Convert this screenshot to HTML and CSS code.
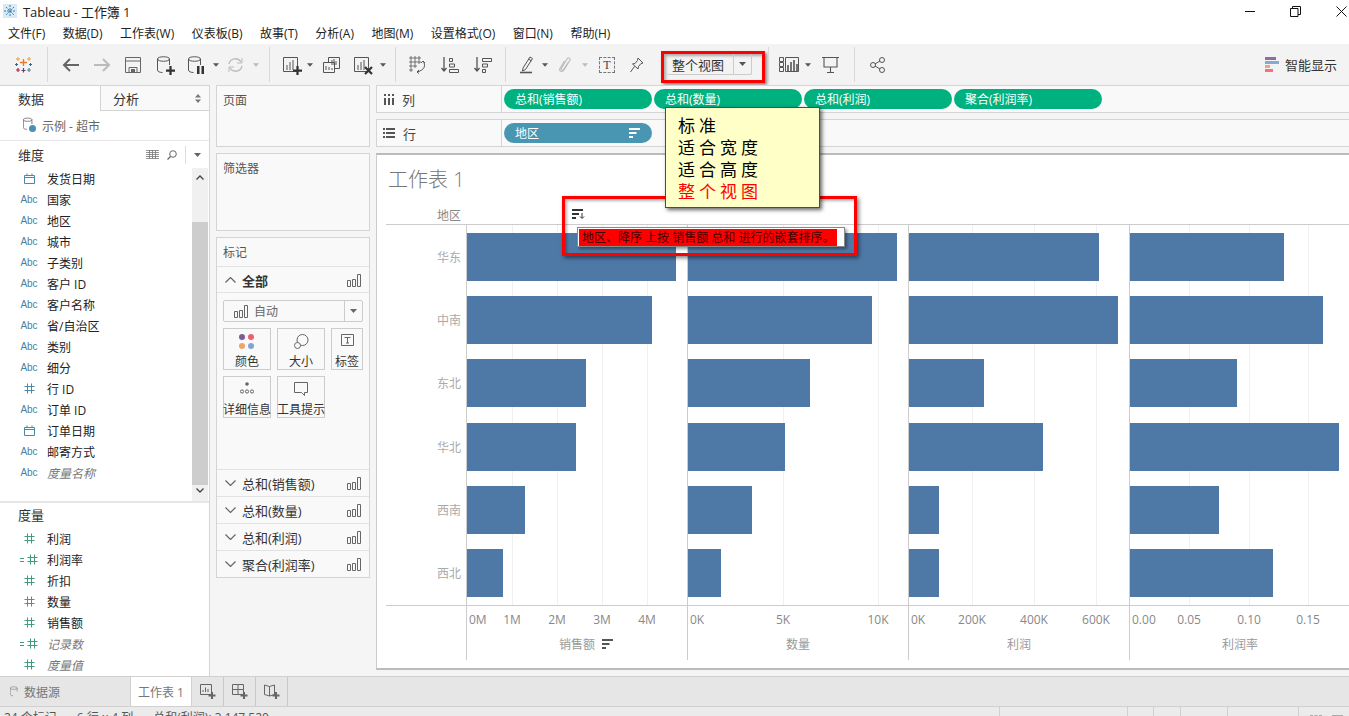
FILE: index.html
```html
<!DOCTYPE html>
<html lang="zh-CN">
<head>
  <meta charset="UTF-8" />
  <title>Tableau - 工作簿 1</title>
  <link rel="stylesheet" href="styles.css">
</head>
<body>
  <svg class="defs" width="0" height="0">
    <symbol id="i-hash" viewBox="0 0 11 11"><path d="M3.5 .5v10M7.5 .5v10M.5 3.5h10M.5 7.5h10" fill="none" stroke="currentColor"/></symbol>
    <symbol id="i-calc" viewBox="0 0 20 11"><path d="M12.5 .5v10M16.5 .5v10M9.5 3.5h10M9.5 7.5h10M2 4.5h4M2 7.5h4" fill="none" stroke="currentColor"/></symbol>
    <symbol id="i-date" viewBox="0 0 11 11"><path d="M.5 2.5h10v8H.5zM3 .5v2M8 .5v2M.5 4.5h10" fill="none" stroke="currentColor"/></symbol>
    <symbol id="i-bars" viewBox="0 0 14 13"><path d="M.5 6.5h3v6h-3zM5.5 5.5h3v7h-3zM10.5 .5h3v12h-3z" fill="none" stroke="currentColor"/></symbol>
    <symbol id="i-sort" viewBox="0 0 11 10"><path d="M0 0h11v2H0zM0 4h7.500v2H0zM0 8h4v2H0z" fill="currentColor"/></symbol>
    <symbol id="i-cyl" viewBox="0 0 14 18"><path d="M.5 3v11c0 1.500 2 2.500 5 2.500M12.500 3v6M.5 3c0-3 12-3 12 0s-12 3-12 0z" fill="none" stroke="currentColor"/></symbol>
    <symbol id="i-chev" viewBox="0 0 11 6"><path d="M.5 .5l5 5 5-5" fill="none" stroke="currentColor" stroke-width="1.200"/></symbol>
    <symbol id="i-caret" viewBox="0 0 7 4"><path d="M0 0h7L3.500 4z" fill="currentColor"/></symbol>
    <symbol id="i-plus" viewBox="0 0 10 10"><path d="M5 0v10M0 5h10" fill="none" stroke="currentColor" stroke-width="2.500"/></symbol>
  </svg>

  <div class="app">
    <header class="title-bar">
      <svg class="app-icon" width="14" height="14" viewBox="0 0 14 14"><rect width="14" height="14" fill="#dbe9f2"/><path d="M7 1v12M1 7h12M3 3l8 8M11 3l-8 8" stroke="#2f7fb0" stroke-width="1" stroke-dasharray="2 1"/></svg>
      <span class="app-name">Tableau - 工作簿 1</span>
      <div class="win-btns">
        <span class="win-btn"><svg width="11" height="11" viewBox="0 0 11 11"><path d="M0 5.500h10" stroke="#111"/></svg></span>
        <span class="win-btn"><svg width="11" height="11" viewBox="0 0 11 11"><path d="M.5 2.500h7.500v8H.5zM2.500 2.500V.5h8v8H8" fill="none" stroke="#111"/></svg></span>
        <span class="win-btn"><svg width="11" height="11" viewBox="0 0 11 11"><path d="M.5 .5l10 10M10.500 .5l-10 10" stroke="#111"/></svg></span>
      </div>
    </header>

    <nav class="menu-bar">
      <span>文件(F)</span><span>数据(D)</span><span>工作表(W)</span><span>仪表板(B)</span><span>故事(T)</span><span>分析(A)</span><span>地图(M)</span><span>设置格式(O)</span><span>窗口(N)</span><span>帮助(H)</span>
    </nav>

    <div class="toolbar">
      <span class="tool w35"><svg width="17" height="17" viewBox="0 0 17 17"><path d="M8.500 3v7M5 6.500h7" stroke="#e8762d" stroke-width="1.300"/><path d="M3 1v4M1 3h4M14 1v4M12 3h4" stroke="#f0a13c" stroke-width="1"/><path d="M3 12v4M1 14h4" stroke="#c72035" stroke-width="1.200"/><path d="M14 12v4M12 14h4" stroke="#5b879b" stroke-width="1.200"/><path d="M8.500 12v4.500M6.500 14.500h4" stroke="#59457a" stroke-width="1.200"/><path d="M1.500 7v3M0 8.500h3M15.500 7v3M14 8.500h3" stroke="#1f6f9c" stroke-width="1"/></svg></span>
      <i class="sep"></i>
      <span class="tool w32"><svg width="17" height="14" viewBox="0 0 17 14"><path d="M17 7H2M8 1L2 7l6 6" fill="none" stroke="#666" stroke-width="2"/></svg></span>
      <span class="tool w32 off"><svg width="17" height="14" viewBox="0 0 17 14"><path d="M0 7h15M9 1l6 6-6 6" fill="none" stroke="#bbb" stroke-width="2"/></svg></span>
      <span class="tool w30"><svg width="16" height="16" viewBox="0 0 16 16"><path d="M.5 .5h15v15H.5zM.5 4h15M4 15.500v-5h8v5" fill="none" stroke="#666"/><path d="M6 12h4v3.500H6z" fill="#666"/></svg></span>
      <span class="tool w32 stack"><svg class="ink" width="14" height="18"><use href="#i-cyl"/></svg><svg class="badge dark" width="9" height="9"><use href="#i-plus"/></svg></span>
      <span class="tool w30 stack"><svg class="ink" width="14" height="18"><use href="#i-cyl"/></svg><svg class="badge" width="7" height="8" viewBox="0 0 7 8"><path d="M0 0h2.500v8H0zM4.500 0H7v8H4.500z" fill="#333"/></svg></span>
      <span class="caret w12"><svg width="6" height="4"><use href="#i-caret"/></svg></span>
      <span class="tool w26"><svg width="17" height="16" viewBox="0 0 17 16"><path d="M2 7a6.500 6.500 0 0 1 12-2M15 9a6.500 6.500 0 0 1-12 2" fill="none" stroke="#bbb" stroke-width="1.300"/><path d="M15 1v5h-5M2 15v-5h5" fill="none" stroke="#bbb"/></svg></span>
      <span class="caret w15 light"><svg width="6" height="4"><use href="#i-caret"/></svg></span>
      <i class="sep"></i>
      <span class="tool w29 stack"><svg class="ink" width="16" height="16" viewBox="0 0 16 16"><path d="M.5 .5h14v14H.5zM4 8v5M7 5v8M10 3v10" fill="none" stroke="currentColor"/></svg><svg class="badge dark" width="9" height="9"><use href="#i-plus"/></svg></span>
      <span class="caret w10"><svg width="6" height="4"><use href="#i-caret"/></svg></span>
      <span class="tool w32"><svg class="ink" width="17" height="16" viewBox="0 0 17 16"><path d="M5.500 5V.5h11v11H12M.5 5.500h11v10H.5zM9 8V3M11 8V2M13 8V4M3 13v-4M6 13v-3M9 13v-2" fill="none" stroke="currentColor"/></svg></span>
      <span class="tool w30 stack"><svg class="ink" width="16" height="16" viewBox="0 0 16 16"><path d="M.5 .5h14v14H.5zM4 8v5M7 5v8M10 3v10" fill="none" stroke="currentColor"/></svg><svg class="badge dark" width="9" height="9" viewBox="0 0 9 9"><path d="M1 1l7 7M8 1L1 8" stroke="#333" stroke-width="2.200"/></svg></span>
      <span class="caret w12"><svg width="6" height="4"><use href="#i-caret"/></svg></span>
      <i class="sep"></i>
      <span class="tool w31"><svg class="ink" width="18" height="18" viewBox="0 0 18 18"><path d="M1 1h2v2H1zM5 1h2v2H5zM9 1h2v2H9zM1 5h2v2H1zM5 5h2v2H5zM9 5h2v2H9zM1 9h2v2H1zM5 9h2v2H5zM1 13h2v2H1z" fill="none" stroke="currentColor" stroke-width=".8"/><path d="M14 5c3 4 2 9-6 11M14 5l-2 2M14 5l2 2M8 16l2-2M8 16l2 1.500" fill="none" stroke="currentColor"/></svg></span>
      <span class="tool w34"><svg class="ink" width="18" height="16" viewBox="0 0 18 16"><path d="M3 0v14M.5 11L3 14l2.500-3" fill="none" stroke="currentColor" stroke-width="1.300"/><path d="M8.500 1.500h3v3h-3zM8.500 7h5v3h-5zM8.500 12.500h9v3h-9z" fill="none" stroke="currentColor"/></svg></span>
      <span class="tool w32"><svg class="ink" width="18" height="16" viewBox="0 0 18 16"><path d="M3 0v14M.5 11L3 14l2.500-3" fill="none" stroke="currentColor" stroke-width="1.300"/><path d="M8.500 1.500h9v3h-9zM8.500 7h5v3h-5zM8.500 12.500h3v3h-3z" fill="none" stroke="currentColor"/></svg></span>
      <i class="sep"></i>
      <span class="tool w28"><svg class="ink" width="13" height="18" viewBox="0 0 13 18"><path d="M3 12L10 1l2.500 1.500L5.500 13.500 2.500 15zM8.500 3l3 2" fill="none" stroke="currentColor"/><path d="M0 16.500h12" stroke="currentColor" stroke-width="1.600"/></svg></span>
      <span class="caret w10"><svg width="6" height="4"><use href="#i-caret"/></svg></span>
      <span class="tool w30"><svg width="12" height="17" viewBox="0 0 12 17"><path d="M9.500 6L4.500 13.500c-1 1.500-3 .5-2.200-1L8 3c1.200-2 4 -.5 2.800 1.500L5 14c-2 3-5.500 1-4-1.800L5.500 5" fill="none" stroke="#bbb" stroke-width="1.100"/></svg></span>
      <span class="caret w10 light"><svg width="6" height="4"><use href="#i-caret"/></svg></span>
      <span class="tool w34"><span class="t-box">T</span></span>
      <span class="tool w26"><svg class="ink" width="14" height="16" viewBox="0 0 14 16"><path d="M8 1l5 5-2 .5-2.500 3L8 12 2.500 7 5 6.500 7.500 3.500zM4.500 9.500L.5 15" fill="none" stroke="currentColor"/></svg></span>
      <div class="annot-fit">
        <div class="combo"><span class="combo-text">整个视图</span><span class="combo-arrow"><svg width="7" height="4"><use href="#i-caret"/></svg></span></div>
      </div>
      <i class="sep"></i>
      <span class="tool w28"><svg class="ink" width="20" height="15" viewBox="0 0 20 15"><path d="M.5 .5h4v4h-4zM.5 5.500h4v4h-4zM.5 10.500h4v4h-4zM6.500 .5h13v14h-13z" fill="none" stroke="currentColor"/><path d="M9 8v6M12 5v9M15 3v11M18 7v7" stroke="currentColor" stroke-width="1.600"/></svg></span>
      <span class="caret w10"><svg width="6" height="4"><use href="#i-caret"/></svg></span>
      <span class="tool w35"><svg class="ink" width="17" height="16" viewBox="0 0 17 16"><path d="M0 .5h17M2 .5v9.500h13V.5M8.500 10v5M5 15.500h7" fill="none" stroke="currentColor" stroke-width="1.100"/></svg></span>
      <i class="sep"></i>
      <span class="tool w32"><svg class="ink" width="15" height="16" viewBox="0 0 15 16"><circle cx="3" cy="8" r="2.500" fill="none" stroke="currentColor"/><circle cx="12" cy="3" r="2.500" fill="none" stroke="currentColor"/><circle cx="12" cy="13" r="2.500" fill="none" stroke="currentColor"/><path d="M5 7l5-3M5 9l5 3" stroke="currentColor"/></svg></span>
      <span class="show-me">
        <svg width="14" height="15" viewBox="0 0 14 15"><path d="M0 0h11v3H0z" fill="#8a7199"/><path d="M0 4h14v3H0z" fill="#85a9d0"/><path d="M0 8h5v3H0z" fill="#eea57b"/><path d="M0 12h8v3H0z" fill="#f2737f"/></svg>
        智能显示
      </span>
    </div>

    <div class="workspace">
      <aside class="data-pane">
        <div class="pane-tabs">
          <span class="pane-tab active">数据</span>
          <span class="pane-tab">分析<svg class="updown" width="6" height="9" viewBox="0 0 6 9"><path d="M0 3.500L3 0l3 3.500zM0 5.500h6L3 9z" fill="#777"/></svg></span>
        </div>
        <div class="source">
          <span class="source-icon"><svg class="ink" width="10" height="14"><use href="#i-cyl"/></svg><i class="source-ok"></i></span>
          示例 - 超市
        </div>
        <div class="dims">
          <div class="section-head">
            <span>维度</span>
            <span class="head-tools">
              <svg class="head-grid" width="13" height="9" viewBox="0 0 13 9"><path d="M0 .5h13M0 2.500h13M0 4.500h13M0 6.500h13M0 8.500h13M3.500 0v9M6.500 0v9M9.500 0v9" stroke="#777" stroke-width=".8"/></svg>
              <svg width="10" height="10" viewBox="0 0 10 10"><circle cx="6" cy="4" r="3.300" fill="none" stroke="#666"/><path d="M3.500 6.500L.5 9.500" stroke="#666" stroke-width="1.300"/></svg>
              <i class="head-sep"></i>
              <svg class="head-caret" width="7" height="4"><use href="#i-caret"/></svg>
            </span>
          </div>
          <div class="dims-body">
            <ul class="fields">
              <li class="field"><span class="type"><svg class="blue" width="11" height="11"><use href="#i-date"/></svg></span>发货日期</li>
              <li class="field"><span class="type abc">Abc</span>国家</li>
              <li class="field"><span class="type abc">Abc</span>地区</li>
              <li class="field"><span class="type abc">Abc</span>城市</li>
              <li class="field"><span class="type abc">Abc</span>子类别</li>
              <li class="field"><span class="type abc">Abc</span>客户 ID</li>
              <li class="field"><span class="type abc">Abc</span>客户名称</li>
              <li class="field"><span class="type abc">Abc</span>省/自治区</li>
              <li class="field"><span class="type abc">Abc</span>类别</li>
              <li class="field"><span class="type abc">Abc</span>细分</li>
              <li class="field"><span class="type"><svg class="blue" width="11" height="11"><use href="#i-hash"/></svg></span>行 ID</li>
              <li class="field"><span class="type abc">Abc</span>订单 ID</li>
              <li class="field"><span class="type"><svg class="blue" width="11" height="11"><use href="#i-date"/></svg></span>订单日期</li>
              <li class="field"><span class="type abc">Abc</span>邮寄方式</li>
              <li class="field gen"><span class="type abc">Abc</span>度量名称</li>
            </ul>
            <div class="scrollbar">
              <svg width="8" height="5" viewBox="0 0 8 5"><path d="M.5 4.500L4 1l3.500 3.500" fill="none" stroke="#444" stroke-width="1.300"/></svg>
              <i class="thumb"></i>
              <svg width="8" height="5" viewBox="0 0 8 5"><path d="M.5 .5L4 4 7.500 .5" fill="none" stroke="#444" stroke-width="1.300"/></svg>
            </div>
          </div>
        </div>
        <div class="measures">
          <div class="section-head"><span>度量</span></div>
          <ul class="fields">
            <li class="field"><span class="type"><svg class="green" width="11" height="11"><use href="#i-hash"/></svg></span>利润</li>
            <li class="field"><span class="type calc"><svg class="green" width="20" height="11"><use href="#i-calc"/></svg></span>利润率</li>
            <li class="field"><span class="type"><svg class="green" width="11" height="11"><use href="#i-hash"/></svg></span>折扣</li>
            <li class="field"><span class="type"><svg class="green" width="11" height="11"><use href="#i-hash"/></svg></span>数量</li>
            <li class="field"><span class="type"><svg class="green" width="11" height="11"><use href="#i-hash"/></svg></span>销售额</li>
            <li class="field gen"><span class="type calc"><svg class="green" width="20" height="11"><use href="#i-calc"/></svg></span>记录数</li>
            <li class="field gen"><span class="type"><svg class="green" width="11" height="11"><use href="#i-hash"/></svg></span>度量值</li>
          </ul>
        </div>
      </aside>

      <section class="cards">
        <div class="card pages"><div class="card-title">页面</div></div>
        <div class="card filters"><div class="card-title">筛选器</div></div>
        <div class="card marks">
          <div class="card-title ruled">标记</div>
          <div class="marks-row all"><svg class="chev" width="11" height="6"><use href="#i-chev"/></svg><b>全部</b><svg class="mini" width="14" height="13"><use href="#i-bars"/></svg></div>
          <div class="mark-type">
            <svg class="mini" width="14" height="13"><use href="#i-bars"/></svg>
            <span>自动</span>
            <span class="mark-arrow"><svg width="7" height="4"><use href="#i-caret"/></svg></span>
          </div>
          <div class="mark-btns">
            <div class="mark-btn">
              <svg width="16" height="16" viewBox="0 0 16 16"><circle cx="3" cy="3" r="3" fill="#7b5e92"/><circle cx="12" cy="3" r="3" fill="#ef5f6f"/><circle cx="3" cy="12" r="3" fill="#f0a36b"/><circle cx="12" cy="12" r="3" fill="#7fa5cf"/></svg>
              <span>颜色</span>
            </div>
            <div class="mark-btn">
              <svg width="15" height="15" viewBox="0 0 15 15"><circle cx="8.500" cy="6" r="5.500" fill="#f9f9f9" stroke="#666"/><circle cx="3.500" cy="11.500" r="3" fill="#f9f9f9" stroke="#666"/></svg>
              <span>大小</span>
            </div>
            <div class="mark-btn">
              <svg width="13" height="12" viewBox="0 0 13 12"><path d="M.5 .5h12v11H.5z" fill="none" stroke="#666"/><path d="M3.500 3.500h6M6.500 3.500v5.500M5 9h3" fill="none" stroke="#666"/></svg>
              <span>标签</span>
            </div>
            <div class="mark-btn">
              <svg width="14" height="12" viewBox="0 0 14 12"><circle cx="7" cy="2" r="1.800" fill="#666"/><circle cx="2" cy="9.500" r="1.600" fill="none" stroke="#666"/><circle cx="7" cy="9.500" r="1.600" fill="none" stroke="#666"/><circle cx="12" cy="9.500" r="1.600" fill="none" stroke="#666"/></svg>
              <span>详细信息</span>
            </div>
            <div class="mark-btn">
              <svg width="14" height="14" viewBox="0 0 14 14"><path d="M.5 .5h13v10H10.500v3l-3-3H.5z" fill="none" stroke="#666"/></svg>
              <span>工具提示</span>
            </div>
          </div>
          <div class="marks-list">
            <div class="marks-row"><svg class="chev" width="11" height="6"><use href="#i-chev"/></svg><span>总和(销售额)</span><svg class="mini" width="14" height="13"><use href="#i-bars"/></svg></div>
            <div class="marks-row"><svg class="chev" width="11" height="6"><use href="#i-chev"/></svg><span>总和(数量)</span><svg class="mini" width="14" height="13"><use href="#i-bars"/></svg></div>
            <div class="marks-row"><svg class="chev" width="11" height="6"><use href="#i-chev"/></svg><span>总和(利润)</span><svg class="mini" width="14" height="13"><use href="#i-bars"/></svg></div>
            <div class="marks-row"><svg class="chev" width="11" height="6"><use href="#i-chev"/></svg><span>聚合(利润率)</span><svg class="mini" width="14" height="13"><use href="#i-bars"/></svg></div>
          </div>
        </div>
      </section>

      <section class="sheet">
        <div class="shelf">
          <div class="shelf-label"><svg class="shelf-icon" width="11" height="11" viewBox="0 0 11 11"><path d="M1 0h2v2H1zM5 0h2v2H5zM9 0h2v2H9z" fill="#555"/><path d="M1 4h2v7H1zM5 4h2v7H5zM9 4h2v7H9z" fill="#555"/></svg>列</div>
          <div class="pills">
            <span class="pill green-pill">总和(销售额)</span>
            <span class="pill green-pill">总和(数量)</span>
            <span class="pill green-pill">总和(利润)</span>
            <span class="pill green-pill">聚合(利润率)</span>
          </div>
        </div>
        <div class="shelf">
          <div class="shelf-label"><svg class="shelf-icon" width="12" height="10" viewBox="0 0 12 10"><path d="M0 0h2v2H0zM0 4h2v2H0zM0 8h2v2H0zM3 0h9v2H3zM3 4h9v2H3zM3 8h9v2H3z" fill="#555"/></svg>行</div>
          <div class="pills">
            <span class="pill blue-pill">地区<svg width="11" height="10"><use href="#i-sort"/></svg></span>
          </div>
        </div>

        <div class="view">
          <h1 class="view-title">工作表 1</h1>
          <div class="chart-head"><span>地区</span></div>
          <div class="chart-body">
            <div class="labels">
              <span>华东</span><span>中南</span><span>东北</span><span>华北</span><span>西南</span><span>西北</span>
            </div>
            <div class="pane">
              <i class="grid" style="left:45px"></i><i class="grid" style="left:90px"></i><i class="grid" style="left:135px"></i><i class="grid" style="left:180px"></i>
              <div class="slot"><i class="bar" style="width:209px"></i></div>
              <div class="slot"><i class="bar" style="width:185px"></i></div>
              <div class="slot"><i class="bar" style="width:119px"></i></div>
              <div class="slot"><i class="bar" style="width:109px"></i></div>
              <div class="slot"><i class="bar" style="width:58px"></i></div>
              <div class="slot"><i class="bar" style="width:36px"></i></div>
            </div>
            <div class="pane">
              <i class="grid" style="left:95px"></i><i class="grid" style="left:190px"></i>
              <div class="slot"><i class="bar" style="width:209px"></i></div>
              <div class="slot"><i class="bar" style="width:184px"></i></div>
              <div class="slot"><i class="bar" style="width:122px"></i></div>
              <div class="slot"><i class="bar" style="width:97px"></i></div>
              <div class="slot"><i class="bar" style="width:64px"></i></div>
              <div class="slot"><i class="bar" style="width:33px"></i></div>
            </div>
            <div class="pane">
              <i class="grid" style="left:63px"></i><i class="grid" style="left:125px"></i><i class="grid" style="left:187px"></i>
              <div class="slot"><i class="bar" style="width:190px"></i></div>
              <div class="slot"><i class="bar" style="width:209px"></i></div>
              <div class="slot"><i class="bar" style="width:75px"></i></div>
              <div class="slot"><i class="bar" style="width:134px"></i></div>
              <div class="slot"><i class="bar" style="width:30px"></i></div>
              <div class="slot"><i class="bar" style="width:30px"></i></div>
            </div>
            <div class="pane">
              <i class="grid" style="left:59px"></i><i class="grid" style="left:119px"></i><i class="grid" style="left:178px"></i>
              <div class="slot"><i class="bar" style="width:154px"></i></div>
              <div class="slot"><i class="bar" style="width:193px"></i></div>
              <div class="slot"><i class="bar" style="width:107px"></i></div>
              <div class="slot"><i class="bar" style="width:209px"></i></div>
              <div class="slot"><i class="bar" style="width:89px"></i></div>
              <div class="slot"><i class="bar" style="width:143px"></i></div>
            </div>
          </div>
          <div class="chart-axes">
            <div class="axis-blank"></div>
            <div class="axis">
              <span class="tick first">0M</span><span class="tick" style="left:45px">1M</span><span class="tick" style="left:90px">2M</span><span class="tick" style="left:135px">3M</span><span class="tick" style="left:180px">4M</span>
              <div class="axis-title">销售额<svg width="11" height="10"><use href="#i-sort"/></svg></div>
            </div>
            <div class="axis">
              <span class="tick first">0K</span><span class="tick" style="left:95px">5K</span><span class="tick" style="left:190px">10K</span>
              <div class="axis-title">数量</div>
            </div>
            <div class="axis">
              <span class="tick first">0K</span><span class="tick" style="left:63px">200K</span><span class="tick" style="left:125px">400K</span><span class="tick" style="left:187px">600K</span>
              <div class="axis-title">利润</div>
            </div>
            <div class="axis">
              <span class="tick first">0.00</span><span class="tick" style="left:59px">0.05</span><span class="tick" style="left:119px">0.10</span><span class="tick" style="left:178px">0.15</span>
              <div class="axis-title">利润率</div>
            </div>
          </div>
        </div>
      </section>
    </div>

    <div class="tabs">
      <span class="tab-source"><svg class="soft" width="8" height="11"><use href="#i-cyl"/></svg>数据源</span>
      <span class="tab-sheet">工作表 1</span>
      <span class="tab-btn"><svg width="16" height="15" viewBox="0 0 16 15"><path d="M.5 .5h11v10H.5zM3 8V6M5.500 8V3.500M8 8V5" fill="none" stroke="#666"/><path d="M12 8v7M8.500 11.500h7" stroke="#666" stroke-width="2"/></svg></span>
      <span class="tab-btn"><svg width="16" height="15" viewBox="0 0 16 15"><path d="M.5 .5h11v10H.5zM.5 5.500h11M6 .5v10" fill="none" stroke="#666"/><path d="M12 8v7M8.500 11.500h7" stroke="#666" stroke-width="2"/></svg></span>
      <span class="tab-btn"><svg width="16" height="15" viewBox="0 0 16 15"><path d="M.5 1l5 1.500L10.500 1v9.500l-5 1.500-5-1.500zM5.500 2.500V12" fill="none" stroke="#666"/><path d="M12 8v7M8.500 11.500h7" stroke="#666" stroke-width="2"/></svg></span>
    </div>

    <footer class="status">
      <div class="status-main"><span>24 个标记</span><span>6 行 x 4 列</span><span>总和(利润): 3,147,520</span></div>
      <div class="status-cell c128"></div>
      <div class="status-cell c26"></div>
      <div class="status-cell c27"></div>
      <div class="status-cell c47"></div>
      <div class="status-cell c71"><svg width="56" height="8" viewBox="0 0 56 8"><path d="M0 2h1.500v6H0zM7 2L2 5l5 3zM22 2l-5 3 5 3zM32 2l5 3-5 3zM47 2l5 3-5 3zM54 2h1.500v6H54z" fill="#aaa"/></svg></div>
      <div class="status-cell end"><svg width="34" height="8" viewBox="0 0 34 8"><path d="M0 1h3v2H0zM4.500 1h3v2h-3zM9 1h3v2H9zM0 4.500h3v2H0zM4.500 4.500h3v2h-3zM9 4.500h3v2H9z" fill="#aaa"/><path d="M22 1h11v7H22z" fill="#aaa"/></svg></div>
    </footer>

    <div class="note-box">
      <svg class="note-icon" width="13" height="10" viewBox="0 0 13 10"><path d="M0 0h11v2H0zM0 4h7v2H0zM0 8h4v2H0z" fill="#333"/><path d="M10 4v5M8 7.500L10 9.500l2-2" fill="none" stroke="#333"/></svg>
      <div class="note-tip"><span>地区、降序 上按 销售额 总和 进行的嵌套排序。</span></div>
    </div>

    <div class="fit-menu">
      <div>标准</div>
      <div>适合宽度</div>
      <div>适合高度</div>
      <div class="picked">整个视图</div>
    </div>
  </div>
</body>
</html>
```

FILE: styles.css
```css
:root {
  --line: #d4d4d4;
  --panel: #f5f5f5;
  --card: #f9f9f9;
  --text: #333;
  --red: #f00;
  --bar: #4e79a7;
}

* {
  box-sizing: border-box;
}

html, body {
  margin: 0;
  padding: 0;
  height: 100%;
  overflow: hidden;
}

body {
  font-family: "Open Sans", "Noto Sans CJK SC", sans-serif;
  font-size: 12px;
  color: var(--text);
  background: #fff;
}

.defs {
  position: absolute;
}

ul {
  list-style: none;
  margin: 0;
  padding: 0;
}

.app {
  position: relative;
  display: flex;
  flex-direction: column;
  width: 1349px;
  height: 716px;
  overflow: hidden;
}

/* title + menu */
.title-bar {
  display: flex;
  align-items: center;
  flex: none;
  height: 22px;
  padding-left: 3px;
}

.app-name {
  margin-left: 6px;
  font-size: 13px;
  letter-spacing: -0.1px;
  color: #222;
}

.win-btns {
  display: flex;
  margin-left: auto;
  margin-right: -15px;
}

.win-btn {
  display: flex;
  justify-content: center;
  align-items: center;
  width: 45.500px;
  height: 20px;
}

.menu-bar {
  display: flex;
  gap: 17.500px;
  flex: none;
  align-items: center;
  height: 22px;
  padding-left: 8px;
  color: #222;
}

/* toolbar */
.toolbar {
  display: flex;
  align-items: center;
  flex: none;
  height: 41px;
  padding-left: 6px;
  background: #f3f3f3;
}

.tool, .caret {
  display: flex;
  flex: none;
  justify-content: center;
  align-items: center;
  height: 32px;
  color: #555;
}

.caret.light {
  color: #bbb;
}

.stack {
  position: relative;
}

.badge {
  position: absolute;
  left: calc(50% + 2px);
  top: 17px;
}

.badge.dark {
  color: #333;
}

.ink {
  color: #555;
}

.w10 { width: 10px; }
.w12 { width: 12px; }
.w15 { width: 15px; }
.w26 { width: 26px; }
.w28 { width: 28px; }
.w29 { width: 29px; }
.w30 { width: 30px; }
.w31 { width: 31px; }
.w32 { width: 32px; }
.w34 { width: 34px; }
.w35 { width: 35px; }

.sep {
  flex: none;
  width: 1px;
  height: 35px;
  margin: 0 6px;
  background: #d8d8d8;
}

.t-box {
  width: 16px;
  height: 16px;
  border: 1px dashed #777;
  font-family: "Liberation Serif", serif;
  font-size: 12px;
  line-height: 14px;
  text-align: center;
  color: #444;
}

.annot-fit {
  flex: none;
  align-self: flex-start;
  width: 104px;
  height: 32px;
  margin: 7px -3px 0 11px;
  padding-left: 3px;
  border: 3px solid var(--red);
  box-shadow: 2px 2px 3px rgba(0, 0, 0, 0.45), inset 2px 2px 3px rgba(0, 0, 0, 0.3);
}

.combo {
  display: flex;
  align-items: center;
  width: 85px;
  height: 21px;
  border-right: 1px solid #ccc;
  border-bottom: 1px solid #ccc;
  border-radius: 2px;
  font-size: 13px;
}

.combo-text {
  flex: 1;
  padding-left: 5px;
}

.combo-arrow {
  display: flex;
  justify-content: center;
  align-items: center;
  width: 18px;
  height: 100%;
  border-left: 1px solid #ccc;
  color: #555;
}

.show-me {
  display: flex;
  align-items: center;
  gap: 6px;
  margin-left: auto;
  margin-right: 12px;
  font-size: 13px;
}

/* main area */
.workspace {
  display: flex;
  flex: 1;
  min-height: 0;
  background: var(--panel);
}

.data-pane {
  display: flex;
  flex-direction: column;
  flex: none;
  width: 210px;
  background: #fff;
  border-top: 1px solid var(--line);
  border-right: 1px solid var(--line);
}

.pane-tabs {
  display: flex;
  flex: none;
  height: 25px;
}

.pane-tab {
  display: flex;
  align-items: center;
  width: 109px;
  padding-left: 12px;
  font-size: 13px;
  background: var(--card);
  border-left: 1px solid var(--line);
  border-bottom: 1px solid var(--line);
}

.pane-tab.active {
  width: 100px;
  padding-left: 18px;
  background: #fff;
  border: 0;
}

.updown {
  margin-left: auto;
  margin-right: 8px;
}

.source {
  display: flex;
  align-items: center;
  flex: none;
  height: 30px;
  padding-left: 23px;
  color: #666;
  border-bottom: 1px solid #e6e6e6;
}

.source-icon {
  position: relative;
  width: 19px;
}

.source-ok {
  position: absolute;
  left: 6px;
  top: 8px;
  width: 7px;
  height: 7px;
  border-radius: 50%;
  background: #4a90b4;
}

.dims {
  display: flex;
  flex-direction: column;
  flex: none;
  height: 362px;
  border-bottom: 2px solid #e6e6e6;
}

.section-head {
  display: flex;
  align-items: center;
  flex: none;
  height: 27px;
  padding-left: 18px;
  font-size: 13px;
}

.head-tools {
  display: flex;
  align-items: center;
  margin-left: auto;
}

.head-tools svg {
  margin-right: 9px;
}

.head-tools .head-grid {
  margin-right: 8px;
}

.head-sep {
  width: 1px;
  height: 18px;
  margin: 0 8px 0 -1px;
  background: #ddd;
}

.head-tools .head-caret {
  margin-right: 8px;
  color: #666;
}

.dims-body {
  display: flex;
  flex: 1;
  min-height: 0;
}

.dims-body .fields {
  flex: 1;
}

.field {
  display: flex;
  align-items: center;
  height: 21px;
  padding-left: 18px;
  color: #222;
}

.field.gen {
  font-style: italic;
  color: #777;
}

.type {
  display: flex;
  justify-content: center;
  align-items: center;
  flex: none;
  width: 22px;
  margin-right: 7px;
}

.abc {
  font-family: "Liberation Sans", sans-serif;
  font-size: 10px;
  font-style: normal;
  color: #4a7f9f;
}

.calc {
  justify-content: flex-start;
}

.blue {
  color: #4a8aa8;
}

.green {
  color: #3f9c80;
}

.scrollbar {
  display: flex;
  flex-direction: column;
  align-items: center;
  justify-content: space-between;
  flex: none;
  width: 16px;
  margin-right: 1px;
  padding: 7px 0 8px;
  background: #f0f0f0;
}

.thumb {
  flex: none;
  width: 100%;
  height: 263px;
  margin-top: 39px;
  background: #cdcdcd;
}

.measures .section-head {
  height: 22px;
}

.measures .fields {
  margin-top: 3px;
}

/* pages / filters / marks */
.cards {
  display: flex;
  flex-direction: column;
  gap: 6px;
  flex: none;
  width: 154px;
  margin-left: 6px;
}

.card {
  flex: none;
  background: var(--card);
  border: 1px solid var(--line);
}

.pages {
  height: 62px;
}

.filters {
  height: 78px;
}

.marks {
  display: flex;
  flex-direction: column;
  height: 341px;
}

.card-title {
  height: 29px;
  padding: 5px 6px 0;
  color: #555;
}

.card-title.ruled {
  flex: none;
  border-bottom: 1px solid #e2e2e2;
}

.marks-row {
  display: flex;
  align-items: center;
  flex: none;
  height: 27px;
  padding: 0 8px;
  font-size: 13px;
  color: #333;
}

.marks-row b, .marks-row span {
  margin-left: 6px;
}

.marks-row .mini {
  margin-left: auto;
}

.marks-row.all {
  height: 26px;
  padding-top: 1px;
  border-bottom: 1px solid #e2e2e2;
}

.chev {
  color: #666;
}

.all .chev {
  transform: rotate(180deg);
}

.mini {
  flex: none;
  color: #666;
}

.mark-type {
  display: flex;
  align-items: center;
  flex: none;
  height: 22px;
  margin: 7px 6px 0;
  padding-left: 10px;
  color: #666;
  background: #f9f9f9;
  border: 1px solid #ccc;
  border-radius: 2px;
}

.mark-type span:nth-child(2) {
  margin-left: 6px;
}

.mark-arrow {
  display: flex;
  justify-content: center;
  align-items: center;
  width: 18px;
  height: 100%;
  margin-left: auto;
  border-left: 1px solid #ccc;
  color: #666;
}

.mark-btns {
  display: grid;
  grid-template-columns: 48px 48px 32px;
  grid-auto-rows: 42px;
  gap: 6px;
  flex: none;
  margin: 6px 6px 0;
}

.mark-btn {
  display: flex;
  flex-direction: column;
  justify-content: space-between;
  align-items: center;
  height: 42px;
  padding-top: 5px;
  border: 1px solid #ccc;
  line-height: 15px;
  white-space: nowrap;
}

.mark-btn span {
  color: #333;
}

.marks-list {
  margin-top: auto;
}

.marks-list .marks-row {
  border-top: 1px solid #e2e2e2;
}

/* shelves + view */
.sheet {
  display: flex;
  flex-direction: column;
  gap: 6px;
  flex: 1;
  min-width: 0;
  margin-left: 6px;
}

.shelf {
  display: flex;
  flex: none;
  height: 28px;
  background: var(--card);
  border-top: 1px solid var(--line);
  border-bottom: 1px solid var(--line);
  border-left: 1px solid var(--line);
}

.shelf-label {
  display: flex;
  align-items: center;
  flex: none;
  width: 125px;
  padding-left: 6px;
  font-size: 13px;
  color: #444;
  border-right: 1px solid var(--line);
}

.shelf-icon {
  margin-right: 8px;
}

.pills {
  display: flex;
  align-items: center;
  gap: 2px;
  padding-left: 2px;
}

.pill {
  display: flex;
  align-items: center;
  justify-content: space-between;
  width: 148px;
  height: 20px;
  padding: 0 12px 0 11px;
  border-radius: 10px;
  color: #fff;
}

.green-pill {
  background: #00b180;
}

.blue-pill {
  background: #4996b2;
}

.view {
  display: flex;
  flex-direction: column;
  flex: none;
  height: 517px;
  padding-left: 9px;
  background: #fff;
  border-top: 2px solid #bbb;
  border-left: 1px solid #ccc;
  border-bottom: 2px solid #bbb;
}

.view-title {
  flex: none;
  height: 52px;
  margin: 0;
  padding: 11px 0 0 2px;
  font-size: 20px;
  font-weight: 300;
  line-height: 28px;
  color: #777;
}

.chart-head {
  display: flex;
  align-items: center;
  flex: none;
  height: 18px;
  width: 963px;
  padding-bottom: 2px;
  color: #888;
  border-bottom: 1px solid #ccc;
}

.chart-head span {
  width: 75px;
  text-align: right;
}

.chart-body {
  display: grid;
  grid-template-columns: 80px repeat(4, 221px);
  flex: none;
  height: 380px;
}

.labels {
  display: flex;
  flex-direction: column;
  color: #aaa;
}

.labels span {
  display: flex;
  flex: 1;
  align-items: center;
  justify-content: flex-end;
  padding-right: 5px;
}

.pane {
  position: relative;
  display: flex;
  flex-direction: column;
  border-left: 1px solid #ccc;
}

.grid {
  position: absolute;
  top: 0;
  bottom: 0;
  width: 1px;
  background: #f0f0f0;
}

.slot {
  position: relative;
  display: flex;
  flex: 1;
  align-items: center;
}

.bar {
  height: 48px;
  background: var(--bar);
}

.chart-axes {
  display: grid;
  grid-template-columns: 80px repeat(4, 221px);
  flex: none;
  width: 963px;
  height: 55px;
  border-top: 1px solid #ccc;
}

.axis {
  position: relative;
  border-left: 1px solid #ccc;
  overflow: visible;
}

.tick {
  position: absolute;
  top: 5px;
  transform: translateX(-50%);
  color: #888;
  white-space: nowrap;
}

.tick.first {
  left: 2px;
  transform: none;
}

.axis-title {
  display: flex;
  justify-content: center;
  align-items: center;
  position: absolute;
  left: 0;
  right: 0;
  top: 29px;
  color: #999;
}

.axis-title svg {
  margin: 0 -18px 0 7px;
  color: #555;
}

/* bottom bars */
.tabs {
  display: flex;
  align-items: stretch;
  flex: none;
  height: 30px;
  background: #e6e6e6;
  border-top: 1px solid #d0d0d0;
  color: #777;
}

.tab-source {
  display: flex;
  align-items: center;
  gap: 6px;
  width: 130px;
  padding-left: 10px;
  font-size: 12px;
}

.soft {
  color: #777;
}

.tab-sheet {
  display: flex;
  align-items: center;
  justify-content: center;
  width: 62px;
  background: #fff;
  border-left: 1px solid #d0d0d0;
  border-right: 1px solid #d0d0d0;
}

.tab-btn {
  display: flex;
  align-items: center;
  justify-content: center;
  width: 32px;
  border-right: 1px solid #c8c8c8;
}

.status {
  display: flex;
  flex: none;
  height: 10px;
  overflow: hidden;
  background: #ebebeb;
  border-top: 1px solid #d0d0d0;
  color: #555;
}

.status-main {
  display: flex;
  gap: 20px;
  width: 999px;
  padding-left: 4px;
  line-height: 21px;
  white-space: nowrap;
}

.status-cell {
  flex: none;
  height: 22px;
  padding-top: 2px;
  border-left: 1px solid #d0d0d0;
  text-align: center;
}

.c128 { width: 128px; }
.c26 { width: 26px; }
.c27 { width: 27px; }
.c47 { width: 47px; }
.c71 { width: 71px; }
.end { flex: 1; padding-left: 6px; }

/* callouts laid over the worksheet */
.note-box {
  position: absolute;
  left: 562px;
  top: 196px;
  width: 295px;
  height: 60px;
  border: 3px solid var(--red);
  box-shadow: 2px 2px 4px rgba(0, 0, 0, 0.5), inset 2px 2px 3px rgba(0, 0, 0, 0.3);
}

.note-icon {
  position: absolute;
  left: 7px;
  top: 10px;
}

.note-tip {
  position: absolute;
  left: 12px;
  top: 28px;
  width: 268px;
  height: 20px;
  padding: 1px;
  background: #fff;
  border: 1px solid #888;
  box-shadow: 2px 2px 3px rgba(0, 0, 0, 0.4);
}

.note-tip span {
  display: block;
  width: 258px;
  height: 17px;
  padding-left: 3px;
  background: var(--red);
  color: #400;
  line-height: 17px;
  white-space: nowrap;
}

.fit-menu {
  position: absolute;
  left: 665px;
  top: 107px;
  width: 155px;
  height: 101px;
  padding: 6.500px 0 0 12px;
  background: #ffffc8;
  border: 1px solid var(--red);
  box-shadow: 2px 2px 4px rgba(0, 0, 0, 0.6);
  font-size: 17px;
  line-height: 22px;
  letter-spacing: 4px;
  color: #000;
}

.fit-menu .picked {
  color: var(--red);
}
```
